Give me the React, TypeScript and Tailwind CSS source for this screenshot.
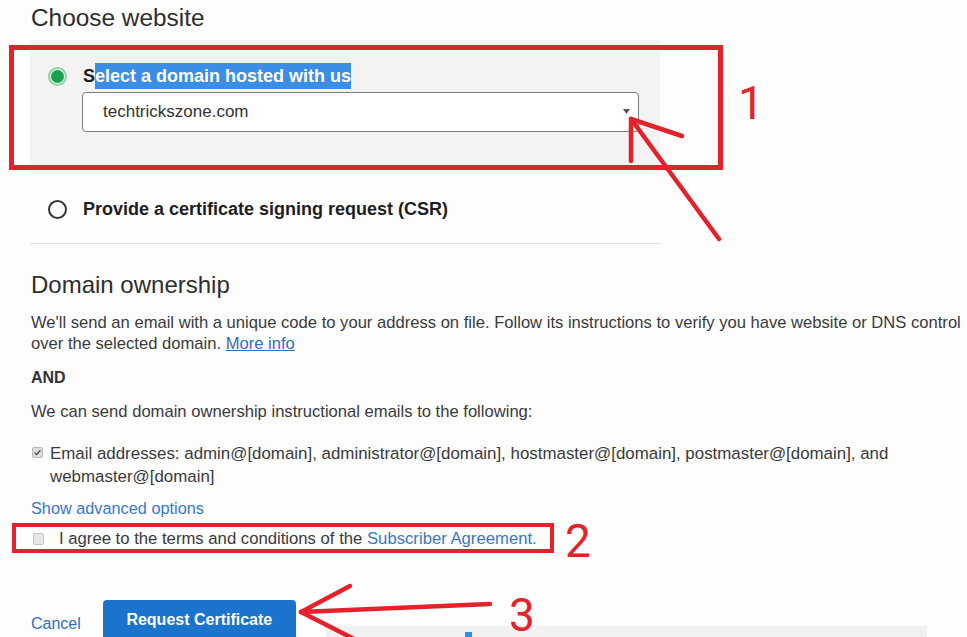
import React from "react";

const RED = "#e4222b";

function CheckedBox() {
  return (
    <span className="mt-[5px] flex h-[11px] w-[11px] shrink-0 items-center justify-center rounded-[2px] border border-[#b9b9b9] bg-[#dcdcdc]">
      <svg width="9" height="9" viewBox="0 0 10 10">
        <path d="M1.8 5.2 L4 7.3 L8.3 2.4" fill="none" stroke="#555" strokeWidth="1.6" />
      </svg>
    </span>
  );
}

export default function App() {
  return (
    <div
      className="relative h-[637px] w-[967px] overflow-hidden bg-[#fdfdfe] text-[#3a3a3a]"
      style={{ fontFamily: '"Liberation Sans", Arial, sans-serif' }}
    >
      <h2 className="pl-[31px] pt-[3px] text-[24.4px] leading-[30px] text-[#2e2e2e]">Choose website</h2>

      {/* grey panel */}
      <div className="ml-[30px] mt-[7px] w-[630px] bg-[#f3f3f3] pb-[41px] pt-[26px]">
        <div className="flex h-[20px] items-center">
          <span className="ml-[18px] flex h-[19px] w-[19px] items-center justify-center rounded-full border-[2px] border-[#8fd2a1] bg-[#f3f3f3]">
            <span className="h-[13px] w-[13px] rounded-full bg-[#17a24b]" />
          </span>
          <span className="ml-[16px] whitespace-nowrap text-[18px] font-bold text-[#1e1e1e]">
            S<span className="bg-[#3a8ee6] py-[3px] text-white">elect a domain hosted with us</span>
          </span>
        </div>
        <div className="relative ml-[52px] mt-[6px] flex h-[40px] w-[557px] items-center rounded-[4px] border border-[#7b7b7b] bg-white pl-[20px] text-[17px] text-[#333]">
          techtrickszone.com
          <svg className="absolute right-[8px] top-[16px]" width="7" height="6" viewBox="0 0 7 6">
            <path d="M0 0 H7 L3.5 5 Z" fill="#555" />
          </svg>
        </div>
      </div>

      <div className="mt-[26px] flex h-[20px] items-center">
        <span className="ml-[48px] h-[19px] w-[19px] rounded-full border-[2px] border-[#333] bg-white" />
        <span className="ml-[16px] whitespace-nowrap text-[18px] font-bold text-[#1e1e1e]">
          Provide a certificate signing request (CSR)
        </span>
      </div>

      <div className="ml-[30px] mt-[24px] h-px w-[630px] bg-[#e1e1e1]" />

      <h2 className="ml-[31px] mt-[26px] text-[24px] leading-[30px] text-[#2e2e2e]">Domain ownership</h2>

      <div className="ml-[31px] mt-[12px] text-[16.6px] leading-[21px]">
        <div className="whitespace-nowrap">
          We'll send an email with a unique code to your address on file. Follow its instructions to verify you have website or DNS control
        </div>
        <div className="whitespace-nowrap">
          over the selected domain.{" "}
          <span className="text-[#2f6fbd] underline">More info</span>
        </div>
      </div>

      <div className="ml-[31px] mt-[13px] text-[16px] font-bold leading-[21px] text-[#333]">AND</div>

      <div className="ml-[31px] mt-[13px] text-[16.6px] leading-[21px]">
        We can send domain ownership instructional emails to the following:
      </div>

      <div className="ml-[32px] mt-[20px] flex gap-[7px] text-[16.9px] leading-[23px]">
        <CheckedBox />
        <div>
          <div className="whitespace-nowrap">
            Email addresses: admin@[domain], administrator@[domain], hostmaster@[domain], postmaster@[domain], and
          </div>
          <div className="whitespace-nowrap">webmaster@[domain]</div>
        </div>
      </div>

      <div className="ml-[31px] mt-[10px] text-[16.3px] leading-[21px] text-[#3a78c4]">Show advanced options</div>

      <div className="ml-[33px] mt-[9px] flex items-center text-[16.7px] leading-[21px]">
        <span className="h-[12px] w-[11px] rounded-[2px] border border-[#c4c4c4] bg-[#e6e6e6]" />
        <span className="ml-[15px] whitespace-nowrap">
          I agree to the terms and conditions of the{" "}
          <span className="text-[#3a78c4]">Subscriber Agreement.</span>
        </span>
      </div>

      <div className="mt-[51px] flex items-start">
        <span className="ml-[31px] mt-[12px] text-[16px] text-[#2f6fbd]">Cancel</span>
        <button className="ml-[22px] h-[40px] w-[193px] rounded-[4px] bg-[#1a73cc] text-[16px] font-bold text-white">
          Request Certificate
        </button>
        <div className="relative ml-[30px] mt-[26px] h-[11px] w-[601px] bg-[#f1f1f1]">
          <span className="absolute left-[139px] top-[6px] h-[5px] w-[7px] bg-[#2a8fe8]" />
        </div>
      </div>

      {/* annotation overlays */}
      <div className="pointer-events-none absolute left-[9px] top-[45px] h-[125px] w-[714px] border-[5px] border-[#e4222b]" />
      <div className="pointer-events-none absolute left-[12px] top-[523px] h-[30px] w-[542px] border-[4px] border-[#e4222b]" />

      <svg className="pointer-events-none absolute left-0 top-0" width="967" height="637" viewBox="0 0 967 637">
        <g stroke={RED} strokeWidth="4.5" strokeLinecap="round" fill="none">
          <path d="M631 119 L719 239" />
          <path d="M631 119 L682 136" />
          <path d="M631 119 L631 161" />
          <path d="M301 612 L490 604" />
          <path d="M301 612 L350 586" />
          <path d="M301 612 L356 640" />
        </g>
      </svg>

      <span
        className="absolute left-[738px] top-[78px] text-[46px] leading-[50px] text-[#e4222b]"
        style={{ fontFamily: '"Roboto", "Liberation Sans", sans-serif' }}
      >
        1
      </span>
      <span
        className="absolute left-[565px] top-[516px] text-[46px] leading-[50px] text-[#e4222b]"
        style={{ fontFamily: '"Roboto", "Liberation Sans", sans-serif' }}
      >
        2
      </span>
      <span
        className="absolute left-[509px] top-[595px] text-[46px] leading-[40px] text-[#e4222b]"
        style={{ fontFamily: '"Roboto", "Liberation Sans", sans-serif' }}
      >
        3
      </span>
    </div>
  );
}
